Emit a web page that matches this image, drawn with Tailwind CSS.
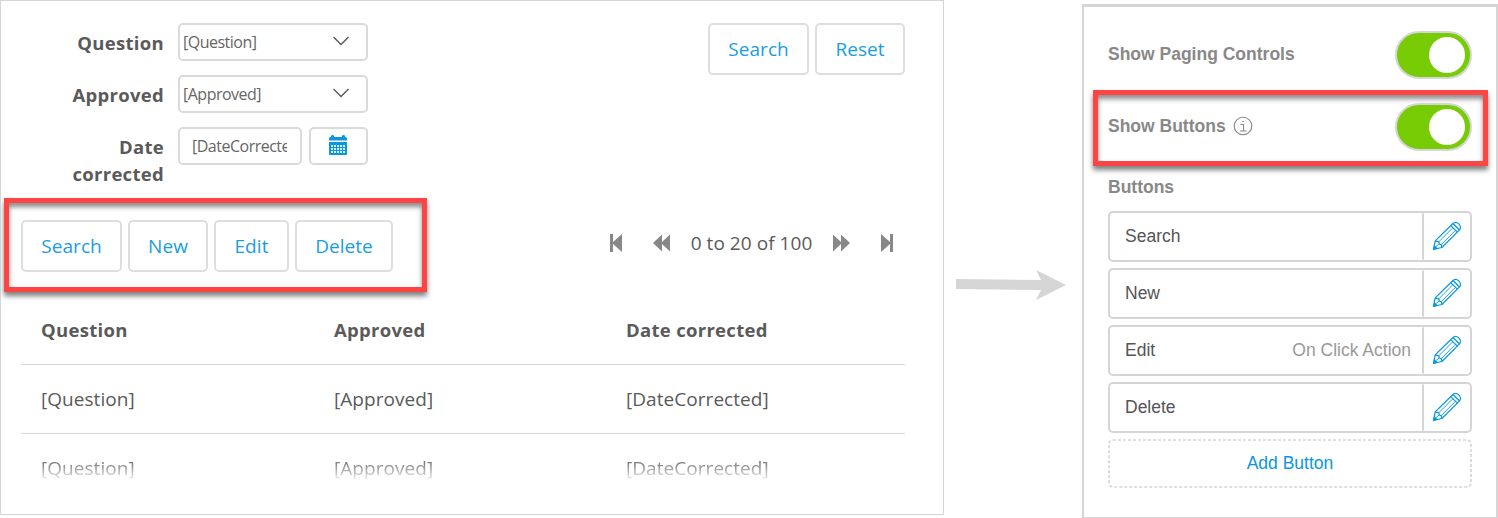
<!DOCTYPE html>
<html lang="en">
<head>
<meta charset="utf-8">
<title>Buttons</title>
<script src="https://cdn.jsdelivr.net/npm/@tailwindcss/browser@4"></script>
</head>
<body class="bg-white w-[1498px] h-[518px] overflow-hidden">
<svg class="hidden">
  <symbol id="pencil" viewBox="0 0 30 30"><g fill="none" stroke="#0a97e0" stroke-width="1.25" stroke-linejoin="round"><path d="M1.500 28.300 3.200 19.900 20.700 2.700C22.300 1.100 24.900 1.100 26.800 2.900C28.800 4.900 28.900 7.500 27.300 9.100L9.900 26.500Z"/><path d="M18.800 4.600 25.300 11.100M21 2.500 27.500 9M3.200 19.900 6.800 20.800 7.300 23 9.300 23.600 9.900 26.500"/><path d="M6.800 20.800 20.900 6.700M9.300 23.600 23.300 9.500M3.700 25.700 7.300 23" stroke-width=".9"/></g><path d="M1 29 2.200 23.900 6 27.600Z" fill="#0a97e0"/></symbol>
  <symbol id="chev" viewBox="0 0 18 10"><path d="M1.500 1 9 8.500 16.500 1" fill="none" stroke="#555" stroke-width="1.300"/></symbol>
</svg>
<main class="flex items-start">
  <section class="w-[944px] h-[515px] shrink-0 border border-[#d5d5d5] pl-5 pr-[38px] pt-[22px] overflow-hidden font-['Open_Sans',sans-serif] text-[19px] tracking-[0.05px] text-[#5a5a5a]">
    <div class="flex justify-between items-start h-[175px]">
      <div class="flex flex-col gap-[14px] leading-[27px]">
        <div class="flex h-[38px] gap-[14px]">
          <div class="w-[143px] text-right font-bold text-[18.5px] tracking-[0.3px] pt-[6px]">Question</div>
          <div class="w-[190px] border-2 border-[#dadada] rounded-[5px] flex items-center justify-between pl-[3px] pr-[16px] text-[16px] tracking-[-0.5px] text-[#666]"><span>[Question]</span><svg class="w-[18px] h-[10px] -mt-[2px]"><use href="#chev"/></svg></div>
        </div>
        <div class="flex h-[38px] gap-[14px]">
          <div class="w-[143px] text-right font-bold text-[18.5px] tracking-[0.3px] pt-[6px]">Approved</div>
          <div class="w-[190px] border-2 border-[#dadada] rounded-[5px] flex items-center justify-between pl-[3px] pr-[16px] text-[16px] tracking-[-0.5px] text-[#666]"><span>[Approved]</span><svg class="w-[18px] h-[10px] -mt-[2px]"><use href="#chev"/></svg></div>
        </div>
        <div class="flex h-[38px] gap-[14px]">
          <div class="w-[143px] text-right font-bold text-[18.5px] tracking-[0.3px] pt-[6px]">Date<br>corrected</div>
          <div class="flex gap-[7px]">
            <div class="w-[124px] border-2 border-[#dadada] rounded-[5px] flex items-center pl-[12px] pr-[13px] text-[16px] tracking-[-0.5px] text-[#666]"><span class="overflow-hidden w-full">[DateCorrected]</span></div>
            <div class="w-[59px] border-2 border-[#dadada] rounded-[5px] flex items-center justify-center pb-[2px] pr-[2px]">
              <svg width="18" height="20" viewBox="0 0 18 20"><path d="M0 3.500Q0 2 1.500 2H2V1Q2 0 3.500 0T5 1V2H13V1Q13 0 14.500 0T16 1V2H16.500Q18 2 18 3.500V5.500H0ZM0 7H18V19Q18 20 17 20H1Q0 20 0 19Z" fill="#0a97e0"/><path d="M2 10h2v2H2zM5 10h2v2H5zM8 10h2v2H8zM11 10h2v2H11zM14 10h2v2H14zM2 13h2v2H2zM5 13h2v2H5zM8 13h2v2H8zM11 13h2v2H11zM14 13h2v2H14zM2 16h2v2H2zM5 16h2v2H5zM8 16h2v2H8zM11 16h2v2H11zM14 16h2v2H14z" fill="#d9f0fc"/></svg>
            </div>
          </div>
        </div>
      </div>
      <div class="flex gap-[6px] text-[#1a9de2]">
        <div class="w-[101px] h-[52px] border-2 border-[#dedede] rounded-[5px] flex items-center justify-center">Search</div>
        <div class="w-[90px] h-[52px] border-2 border-[#dedede] rounded-[5px] flex items-center justify-center">Reset</div>
      </div>
    </div>
    <div class="-ml-[17px] flex items-start justify-between h-[97px]">
      <div class="w-[423px] h-[94px] border-[5px] border-[#ff4444] shadow-[0_4px_5px_rgba(0,0,0,0.5),inset_0_4px_5px_rgba(0,0,0,0.45)] pl-[12px] pt-[17px] flex gap-[6px] text-[#1a9de2]">
        <div class="w-[101px] h-[52px] border-2 border-[#dedede] rounded-[5px] flex items-center justify-center">Search</div>
        <div class="w-[80px] h-[52px] border-2 border-[#dedede] rounded-[5px] flex items-center justify-center">New</div>
        <div class="w-[75px] h-[52px] border-2 border-[#dedede] rounded-[5px] flex items-center justify-center">Edit</div>
        <div class="w-[98px] h-[52px] border-2 border-[#dedede] rounded-[5px] flex items-center justify-center">Delete</div>
      </div>
      <div class="flex items-center pt-[30px] pr-[12px] leading-[27px]">
        <svg width="12" height="18" viewBox="0 0 12 18" fill="#888"><path d="M0 0H3V8L12 0V18L3 10V18H0Z"/></svg>
        <svg class="ml-[31px]" width="17" height="18" viewBox="0 0 17 18" fill="#888"><path d="M0 9 9 0.500V8L17 .5V17.500L9 10V17.500Z"/></svg>
        <span class="w-[163px] text-center pt-[2px]">0 to 20 of 100</span>
        <svg width="17" height="18" viewBox="0 0 17 18" fill="#888"><path d="M17 9 8 .5V8L0 .5V17.500L8 10V17.500Z"/></svg>
        <svg class="ml-[31px]" width="12" height="18" viewBox="0 0 12 18" fill="#888"><path d="M12 0H9V8L0 0V18L9 10V18H12Z"/></svg>
      </div>
    </div>
    <div class="leading-[27px]">
      <div class="h-[70px] border-b border-[#d5d5d5] grid grid-cols-[293px_292px_1fr] items-center pl-5 font-bold text-[18.5px] tracking-[0.3px]"><span>Question</span><span>Approved</span><span>Date corrected</span></div>
      <div class="h-[69px] border-b border-[#d5d5d5] grid grid-cols-[293px_292px_1fr] items-center pl-5"><span>[Question]</span><span>[Approved]</span><span>[DateCorrected]</span></div>
      <div class="h-[69px] grid grid-cols-[293px_292px_1fr] items-center pl-5 mask-[linear-gradient(to_bottom,black_34%,transparent_70%)]"><span>[Question]</span><span>[Approved]</span><span>[DateCorrected]</span></div>
    </div>
  </section>

  <svg class="shrink-0 ml-[12px] mt-[269px]" width="111" height="32" viewBox="0 0 111 32"><path d="M0 10 85 11 80 1 110 16 80 31 85 21 0 20Z" fill="#d5d5d5"/></svg>

  <section class="shrink-0 ml-[15px] mt-[4px] w-[416px] h-[514px] border-l-2 border-t-3 border-r-2 border-b border-[#d5d5d5] pl-[24px] pr-[24px] font-['Liberation_Sans',sans-serif] text-[17.5px] leading-[20px] text-[#555]">
    <div class="h-[83px] pt-[24px] flex justify-between items-start font-bold text-[#888]">
      <span class="pt-[13px]">Show Paging Controls</span>
      <span class="w-[77px] h-[48px] rounded-full border-2 border-[#d5d5d5] bg-[#77cc05] p-[4px] pr-[5px] flex justify-end"><span class="w-[36px] h-[36px] rounded-full bg-white"></span></span>
    </div>
    <div class="-ml-[15px] -mr-[16px] h-[76px] border-[5px] border-[#ff4444] shadow-[0_4px_5px_rgba(0,0,0,0.5),inset_0_4px_5px_rgba(0,0,0,0.45)] pl-[10px] pr-[11px] pt-[8px] flex justify-between items-start font-bold text-[#888]">
      <span class="pt-[13px] flex items-center gap-[7px]">Show Buttons
        <svg width="20" height="20" viewBox="0 0 20 20"><circle cx="10" cy="10" r="8.800" fill="none" stroke="#888" stroke-width="1.100"/><path d="M7.500 8.500H10.500V15M7 15H13.500M9.200 5.500H10.900" fill="none" stroke="#888" stroke-width="1.100"/></svg>
      </span>
      <span class="w-[77px] h-[48px] rounded-full border-2 border-[#d5d5d5] bg-[#77cc05] p-[4px] pr-[5px] flex justify-end"><span class="w-[36px] h-[36px] rounded-full bg-white"></span></span>
    </div>
    <div class="h-[45px] pt-[11px] font-bold text-[#888]">Buttons</div>
    <div class="flex flex-col gap-[6px]">
      <div class="h-[51px] border-2 border-[#d5d5d5] rounded-[5px] flex items-center pl-[15px]"><span class="flex-1 pb-[2px]">Search</span><span class="h-full w-[48px] border-l-2 border-[#d5d5d5] rounded-[2px] flex items-center justify-center pb-[1px]"><svg class="w-[30px] h-[30px]"><use href="#pencil"/></svg></span></div>
      <div class="h-[51px] border-2 border-[#d5d5d5] rounded-[5px] flex items-center pl-[15px]"><span class="flex-1 pb-[2px]">New</span><span class="h-full w-[48px] border-l-2 border-[#d5d5d5] rounded-[2px] flex items-center justify-center pb-[1px]"><svg class="w-[30px] h-[30px]"><use href="#pencil"/></svg></span></div>
      <div class="h-[51px] border-2 border-[#d5d5d5] rounded-[5px] flex items-center pl-[15px]"><span class="flex-1 pb-[2px]">Edit</span><span class="text-[#999] pb-[2px] mr-[11px]">On Click Action</span><span class="h-full w-[48px] border-l-2 border-[#d5d5d5] rounded-[2px] flex items-center justify-center pb-[1px]"><svg class="w-[30px] h-[30px]"><use href="#pencil"/></svg></span></div>
      <div class="h-[51px] border-2 border-[#d5d5d5] rounded-[5px] flex items-center pl-[15px]"><span class="flex-1 pb-[2px]">Delete</span><span class="h-full w-[48px] border-l-2 border-[#d5d5d5] rounded-[2px] flex items-center justify-center pb-[1px]"><svg class="w-[30px] h-[30px]"><use href="#pencil"/></svg></span></div>
      <div class="h-[49px] grid place-items-center text-[#0a97e0]">
        <svg class="col-start-1 row-start-1" width="364" height="49" viewBox="0 0 364 49"><rect x="1" y="1" width="362" height="47" rx="4" fill="none" stroke="#d5d5d5" stroke-width="1.700" stroke-dasharray="3 2"/></svg>
        <span class="col-start-1 row-start-1 pb-[2px]">Add Button</span>
      </div>
    </div>
  </section>
</main>
</body>
</html>
